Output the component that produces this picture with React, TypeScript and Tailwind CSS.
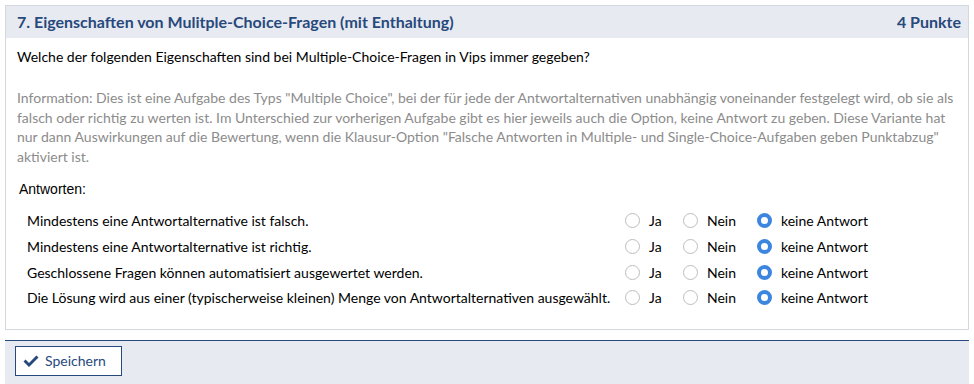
const answers = [
  'Mindestens eine Antwortalternative ist falsch.',
  'Mindestens eine Antwortalternative ist richtig.',
  'Geschlossene Fragen können automatisiert ausgewertet werden.',
  'Die Lösung wird aus einer (typischerweise kleinen) Menge von Antwortalternativen ausgewählt.',
];

function Radio({ checked }: { checked?: boolean }) {
  return checked ? (
    <span className="inline-block h-[15px] w-[15px] shrink-0 rounded-full border-[4px] border-[#3d86e0] bg-white" />
  ) : (
    <span className="inline-block h-[15px] w-[15px] shrink-0 rounded-full border border-[#bdbdbd] bg-white" />
  );
}

export default function App() {
  return (
    <div className="min-h-[384px] bg-white p-[5px] font-['Lato','Noto_Sans',sans-serif] text-[14px] text-black">
      {/* Aufgabe */}
      <section className="border border-[#d3d8e1]">
        <header className="flex h-[32px] items-center justify-between bg-[#e7ebf1] pl-[11px] pr-[7px] text-[16px] font-bold text-[#28497c]">
          <h2>7. Eigenschaften von Mulitple-Choice-Fragen (mit Enthaltung)</h2>
          <span>4 Punkte</span>
        </header>

        <div className="px-[11px] pb-[18px] pt-[9px]">
          <p className="leading-[20px]">
            Welche der folgenden Eigenschaften sind bei Multiple-Choice-Fragen in Vips immer gegeben?
          </p>
          <p className="mt-[21px] leading-[19.5px] text-[#8c8c8c]">
            Information: Dies ist eine Aufgabe des Typs "Multiple Choice", bei der für jede der Antwortalternativen
            unabhängig voneinander festgelegt wird, ob sie als falsch oder richtig zu werten ist. Im Unterschied zur
            vorherigen Aufgabe gibt es hier jeweils auch die Option, keine Antwort zu geben. Diese Variante hat nur
            dann Auswirkungen auf die Bewertung, wenn die Klausur-Option "Falsche Antworten in Multiple- und
            Single-Choice-Aufgaben geben Punktabzug" aktiviert ist.
          </p>
          <p className="mt-[13px] pl-[2px] font-['Liberation_Sans',Arial,sans-serif] leading-[20px]">Antworten:</p>

          <div className="mt-[9px] grid grid-cols-[598px_58px_74px_auto] pl-[10px]">
            {answers.map((a) => (
              <div key={a} className="contents">
                <div className="flex h-[25.7px] items-center">{a}</div>
                <label className="flex items-center gap-[9px]">
                  <Radio />
                  Ja
                </label>
                <label className="flex items-center gap-[9px]">
                  <Radio />
                  Nein
                </label>
                <label className="flex items-center gap-[9px]">
                  <Radio checked />
                  keine Antwort
                </label>
              </div>
            ))}
          </div>
        </div>
      </section>

      {/* Fußleiste */}
      <footer className="mt-[10px] h-[44px] border-t border-[#28497c] bg-[#e7ebf1] px-[10px] pt-[5px]">
        <button
          type="button"
          className="flex h-[30px] w-[107px] items-center gap-[6px] border border-[#28497c] bg-white pl-[7px] text-[#28497c]"
        >
          <svg className="h-[14px] w-[16px]" viewBox="0 0 16 14" fill="currentColor">
            <path d="M0.5 7.6 L2.6 5.5 L6 8.9 L13.4 1.5 L15.5 3.6 L6 13.1 Z" />
          </svg>
          Speichern
        </button>
      </footer>
    </div>
  );
}
